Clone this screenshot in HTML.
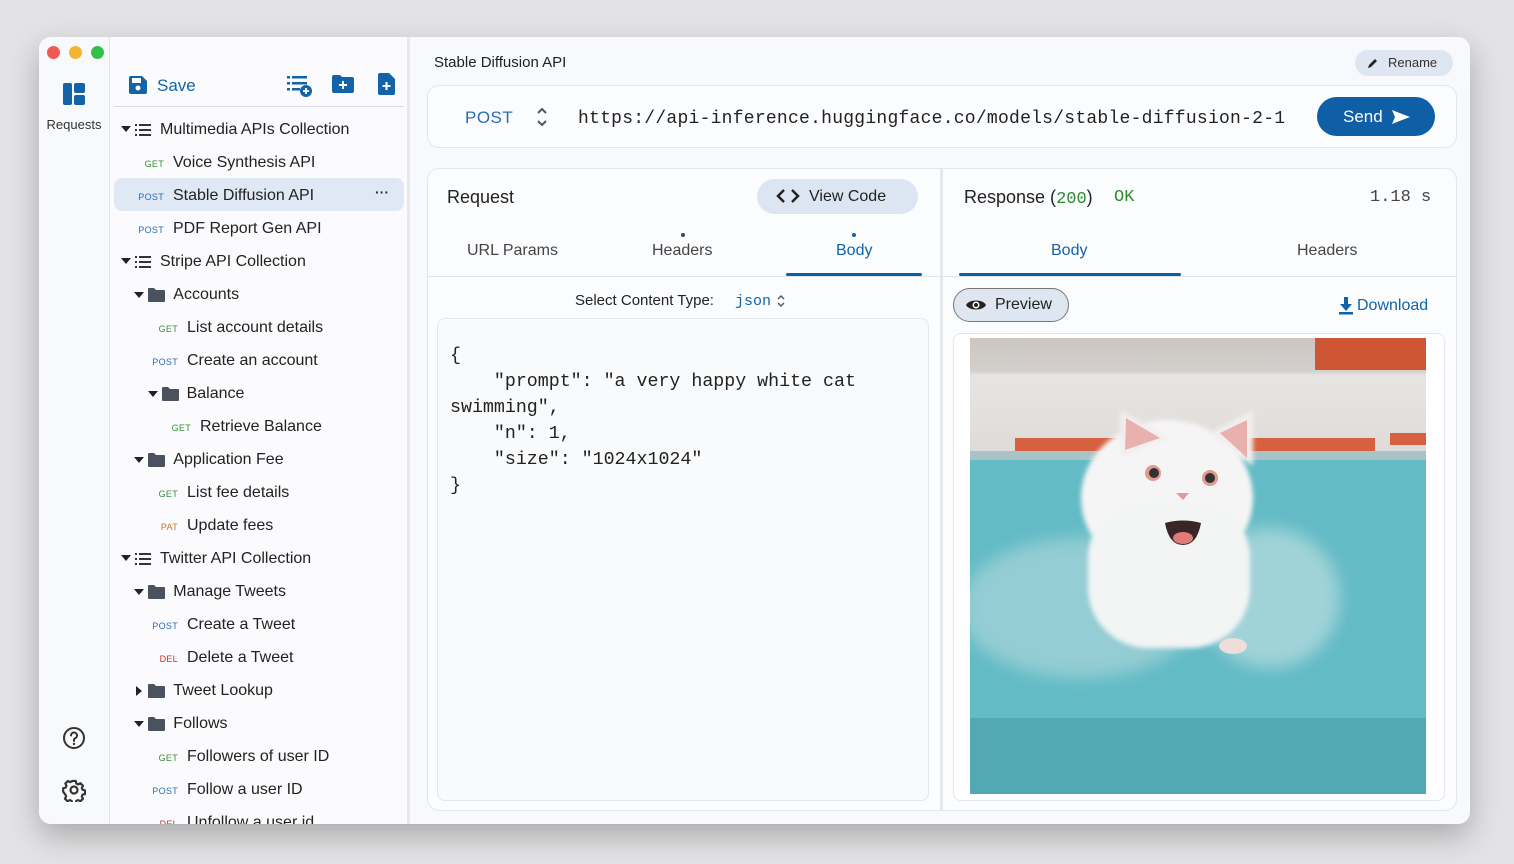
<!DOCTYPE html>
<html><head><meta charset="utf-8"><style>
*{box-sizing:border-box;margin:0;padding:0}
body{width:1514px;height:864px;background:#e3e3e5;font-family:"Liberation Sans",sans-serif;position:relative;overflow:hidden;color:#222}
.win{position:absolute;left:39px;top:37px;width:1431px;height:787px;border-radius:12px;background:#f8f9fc;overflow:hidden;box-shadow:0 12px 30px rgba(0,0,0,.25)}
.rail{position:absolute;left:0;top:0;width:71px;height:100%;background:#f8f9fb;border-right:1px solid #e2e4e8}
.side{position:absolute;left:71px;top:0;width:300px;height:100%;background:#fbfbfd;border-right:3px solid #e6e8ec}
.dot{position:absolute;top:9px;width:13px;height:13px;border-radius:50%}
.abs{position:absolute}
.row{position:absolute;font-size:16px;color:#222;white-space:nowrap;line-height:20px}
.m{position:absolute;font-size:9px;letter-spacing:.3px;line-height:20px}
.get{color:#3c8a3c}.post{color:#2a6db5}.del{color:#c03030}.pat{color:#c77a20}
.mono{font-family:"Liberation Mono",monospace}
.card{position:absolute;background:#fbfcfe;border:1px solid #e4e6ea;border-radius:12px}
</style></head><body>
<div class="win">
 <div class="rail">
  <div class="dot" style="left:8px;background:#ee5b52"></div>
  <div class="dot" style="left:30px;background:#f3b52f"></div>
  <div class="dot" style="left:52px;background:#33c048"></div>
  <svg class="abs" style="left:24px;top:46px" width="22" height="22" viewBox="0 0 22 22"><rect x="0" y="0" width="9" height="22" rx="2" fill="#1263a8"/><rect x="11" y="0" width="11" height="10" rx="2" fill="#1263a8"/><rect x="11" y="12" width="11" height="10" rx="2" fill="#1263a8"/></svg>
  <div class="abs" style="left:0;width:70px;top:80px;text-align:center;font-size:13px;color:#333">Requests</div>
  <svg class="abs" style="left:23px;top:689px" width="24" height="24" viewBox="0 0 24 24"><circle cx="12" cy="12" r="10" fill="none" stroke="#333" stroke-width="2"/><path d="M9 9.5a3 3 0 1 1 4 2.8c-.8.4-1 1-1 1.7V15" fill="none" stroke="#333" stroke-width="2" stroke-linecap="round"/><circle cx="12" cy="18" r="1.2" fill="#333"/></svg>
  <svg class="abs" style="left:23px;top:741px" width="24" height="24" viewBox="0 0 24 24"><path d="M10 2h4l.6 2.8 2 1 2.6-1.3 2.8 2.8-1.3 2.6.9 2 2.8.6v4l-2.8.6-.9 2 1.3 2.6-2.8 2.8-2.6-1.3-2 .9-.6 2.8h-4l-.6-2.8-2-.9-2.6 1.3-2.8-2.8 1.3-2.6-.9-2L0 14v-4l2.8-.6.9-2-1.3-2.6 2.8-2.8 2.6 1.3 2-1z" transform="scale(.9) translate(1.3 1.3)" fill="none" stroke="#333" stroke-width="2.4" stroke-linejoin="round"/><circle cx="12" cy="12" r="3.5" fill="none" stroke="#333" stroke-width="2.2"/></svg>
 </div>
 <div class="side">
  <svg class="abs" style="left:19px;top:39px" width="18" height="18" viewBox="0 0 18 18"><path d="M0 2a2 2 0 0 1 2-2h11l5 5v11a2 2 0 0 1-2 2H2a2 2 0 0 1-2-2z" fill="#1263a8"/><rect x="3" y="2" width="9" height="5" fill="#fbfbfd"/><circle cx="9" cy="12" r="2.5" fill="#fbfbfd"/></svg>
  <div class="abs" style="left:47px;top:39px;font-size:17px;color:#1263a8">Save</div>
  <svg class="abs" style="left:177px;top:38px" width="26" height="22" viewBox="0 0 26 22"><g fill="#1263a8"><rect x="0" y="1" width="3" height="2.5"/><rect x="5" y="1" width="15" height="2.5"/><rect x="0" y="7" width="3" height="2.5"/><rect x="5" y="7" width="15" height="2.5"/><rect x="0" y="13" width="3" height="2.5"/><rect x="5" y="13" width="8" height="2.5"/><circle cx="19" cy="16" r="6"/></g><path d="M19 13v6M16 16h6" stroke="#fff" stroke-width="1.8"/></svg>
  <svg class="abs" style="left:222px;top:38px" width="22" height="18" viewBox="0 0 22 18"><path d="M0 2a2 2 0 0 1 2-2h6l2 2h10a2 2 0 0 1 2 2v12a2 2 0 0 1-2 2H2a2 2 0 0 1-2-2z" fill="#1263a8"/><path d="M11 6v8M7 10h8" stroke="#fff" stroke-width="2"/></svg>
  <svg class="abs" style="left:268px;top:36px" width="17" height="22" viewBox="0 0 17 22"><path d="M0 2a2 2 0 0 1 2-2h9l6 6v14a2 2 0 0 1-2 2H2a2 2 0 0 1-2-2z" fill="#1263a8"/><path d="M8.5 9v8M4.5 13h8" stroke="#fff" stroke-width="2"/></svg>
  <div class="abs" style="left:4px;top:69px;width:290px;height:1px;background:#d9dbe0"></div>
  <div class="abs" style="left:4px;top:141px;width:290px;height:33px;border-radius:8px;background:#dfe8f4"></div>
  <div class="abs" style="left:265px;top:147px;font-size:14px;font-weight:bold;color:#333">···</div>
  <div id="tree"></div>
 </div>
 <div class="abs" style="left:395px;top:17px;font-size:15px;color:#222">Stable Diffusion API</div>
 <div class="abs" style="left:1316px;top:13px;width:98px;height:26px;border-radius:13px;background:#dde6f1;font-size:13px;color:#333;line-height:26px;padding-left:33px">Rename</div>
 <svg class="abs" style="left:1328px;top:20px" width="12" height="12" viewBox="0 0 12 12"><path d="M1 11l1-3 6-6 2 2-6 6z" fill="#222"/></svg>
 <div class="card" style="left:388px;top:48px;width:1030px;height:63px"></div>
 <div class="abs" style="left:426px;top:71px;font-size:17px;color:#2a6db5;letter-spacing:.5px">POST</div>
 <svg class="abs" style="left:497px;top:69px" width="12" height="22" viewBox="0 0 12 22"><path d="M2 7l4-4 4 4M2 15l4 4 4-4" fill="none" stroke="#555" stroke-width="2"/></svg>
 <div class="abs mono" style="left:539px;top:72px;font-size:18px;color:#222;letter-spacing:.25px">https://api-inference.huggingface.co/models/stable-diffusion-2-1</div>
 <div class="abs" style="left:1278px;top:60px;width:118px;height:39px;border-radius:20px;background:#0f5fa6;color:#fff;font-size:17px;line-height:39px;padding-left:26px">Send</div>
 <svg class="abs" style="left:1353px;top:73px" width="18" height="14" viewBox="0 0 18 14"><path d="M0 0l18 7-18 7 3-7z" fill="#fff"/></svg>

 <div class="card" style="left:388px;top:131px;width:1030px;height:643px"></div>
 <div class="abs" style="left:901px;top:132px;width:3px;height:641px;background:#e6e8ec"></div>
 <div class="abs" style="left:389px;top:239px;width:1028px;height:1px;background:#e2e4e8"></div>
 <div class="abs" style="left:408px;top:150px;font-size:18px;color:#222">Request</div>
 <div class="abs" style="left:718px;top:142px;width:161px;height:35px;border-radius:18px;background:#dce6f2;font-size:16px;color:#222;line-height:35px;padding-left:52px">View Code</div>
 <svg class="abs" style="left:737px;top:152px" width="24" height="14" viewBox="0 0 24 14"><path d="M8 1L2 7l6 6M16 1l6 6-6 6" fill="none" stroke="#222" stroke-width="2.5"/></svg>
 <div class="abs" style="left:428px;top:205px;font-size:16px;color:#444">URL Params</div>
 <div class="abs" style="left:613px;top:205px;font-size:16px;color:#444">Headers</div>
 <div class="abs" style="left:642px;top:196px;width:4px;height:4px;border-radius:50%;background:#444"></div>
 <div class="abs" style="left:797px;top:205px;font-size:16px;color:#1263a8">Body</div>
 <div class="abs" style="left:813px;top:196px;width:4px;height:4px;border-radius:50%;background:#1263a8"></div>
 <div class="abs" style="left:747px;top:236px;width:136px;height:3px;background:#0f5fa6;border-radius:2px"></div>
 <div class="abs" style="left:536px;top:255px;font-size:15px;color:#222">Select Content Type:</div>
 <div class="abs mono" style="left:696px;top:256px;font-size:15px;color:#1263a8">json</div>
 <svg class="abs" style="left:738px;top:257px" width="8" height="14" viewBox="0 0 8 14"><path d="M1 5l3-3 3 3M1 9l3 3 3-3" fill="none" stroke="#555" stroke-width="1.4"/></svg>
 <div class="abs" style="left:398px;top:281px;width:492px;height:483px;border:1px solid #e4e6ea;border-radius:8px;background:#f9fafb"></div>
 <pre class="abs mono" style="left:411px;top:306px;font-size:18.3px;line-height:26px;color:#222">{
    "prompt": "a very happy white cat
swimming",
    "n": 1,
    "size": "1024x1024"
}</pre>

 <div class="abs" style="left:925px;top:150px;font-size:18px;color:#222">Response (<span class="mono" style="color:#2f8a2f;font-size:17px">200</span>)</div>
 <div class="abs mono" style="left:1075px;top:151px;font-size:17px;color:#2f8a2f">OK</div>
 <div class="abs mono" style="left:1331px;top:151px;font-size:17px;color:#444">1.18 s</div>
 <div class="abs" style="left:1012px;top:205px;font-size:16px;color:#1263a8">Body</div>
 <div class="abs" style="left:1258px;top:205px;font-size:16px;color:#444">Headers</div>
 <div class="abs" style="left:920px;top:236px;width:222px;height:3px;background:#0f5fa6;border-radius:2px"></div>
 <div class="abs" style="left:914px;top:251px;width:116px;height:34px;border-radius:17px;background:#dde6f1;border:1px solid #777;font-size:16px;color:#222;line-height:32px;padding-left:41px">Preview</div>
 <svg class="abs" style="left:927px;top:261px" width="20" height="14" viewBox="0 0 20 14"><path d="M0 7C3 1 17 1 20 7 17 13 3 13 0 7z" fill="#222"/><circle cx="10" cy="7" r="3.5" fill="#fff"/><circle cx="10" cy="7" r="2" fill="#222"/></svg>
 <svg class="abs" style="left:1300px;top:260px" width="14" height="18" viewBox="0 0 14 18"><path d="M5 0h4v7h4l-6 7-6-7h4z" fill="#1263a8"/><rect x="0" y="15" width="14" height="2.5" fill="#1263a8"/></svg>
 <div class="abs" style="left:1318px;top:260px;font-size:16px;color:#1263a8">Download</div>
 <div class="abs" style="left:914px;top:296px;width:492px;height:468px;border:1px solid #e4e6ea;border-radius:8px;background:#fff"></div>
 <svg class="abs" style="left:931px;top:301px" width="456" height="456" viewBox="0 0 456 456">
  <defs>
   <linearGradient id="bg" x1="0" y1="0" x2="0" y2="1"><stop offset="0" stop-color="#cbc6c2"/><stop offset=".28" stop-color="#d3cfcc"/><stop offset=".32" stop-color="#e7e5e3"/><stop offset="1" stop-color="#dedad7"/></linearGradient>
   <filter id="b"><feGaussianBlur stdDeviation="8"/></filter>
   <filter id="b2"><feGaussianBlur stdDeviation="2.5"/></filter>
  </defs>
  <rect width="456" height="456" fill="#5cb4bf"/>
  <rect width="456" height="118" fill="url(#bg)"/>
  <rect x="345" y="0" width="111" height="32" fill="#cf5634"/>
  <rect x="45" y="100" width="360" height="13" fill="#d6603f"/>
  <rect x="420" y="95" width="36" height="12" fill="#d6603f"/>
  <rect y="113" width="456" height="9" fill="#a9c4c6"/>
  <rect y="122" width="456" height="334" fill="#63bbc5"/>
  <rect y="380" width="456" height="76" fill="#52a9b4"/>
  <ellipse cx="110" cy="270" rx="120" ry="70" fill="#bcdcdf" opacity=".55" filter="url(#b)"/>
  <ellipse cx="300" cy="260" rx="70" ry="70" fill="#c9e3e5" opacity=".6" filter="url(#b)"/>
  <g filter="url(#b2)">
   <ellipse cx="197" cy="160" rx="86" ry="78" fill="#f6f5f5"/>
   <rect x="118" y="160" width="162" height="150" rx="60" fill="#f3f4f4"/>
   <path d="M150 120L150 72 200 100z" fill="#f2eeee"/>
   <path d="M240 95L283 72 283 128z" fill="#f2eeee"/>
  </g>
  <path d="M155 112L156 80 190 100z" fill="#e9b1ad"/>
  <path d="M250 95L277 82 277 120z" fill="#e9b1ad"/>
  <circle cx="183" cy="135" r="8" fill="#e39a8e"/><circle cx="184" cy="135" r="5" fill="#333"/>
  <circle cx="240" cy="140" r="8" fill="#e39a8e"/><circle cx="240" cy="140" r="5" fill="#333"/>
  <path d="M206 155h13l-6 7z" fill="#e49a98"/>
  <path d="M195 185q18 -5 36 0q-4 22 -18 22q-14 0 -18 -22z" fill="#3a2626"/>
  <ellipse cx="213" cy="200" rx="10" ry="6" fill="#e07c78"/>
  <ellipse cx="263" cy="308" rx="14" ry="8" fill="#eedddb"/>
 </svg>
</div>
<script>
var R=[
[0,'c','Multimedia APIs Collection'],[1,'get','Voice Synthesis API'],[1,'post','Stable Diffusion API'],[1,'post','PDF Report Gen API'],
[0,'c','Stripe API Collection'],[1,'f','Accounts',1],[2,'get','List account details'],[2,'post','Create an account'],[2,'f','Balance',1],[3,'get','Retrieve Balance'],
[1,'f','Application Fee',1],[2,'get','List fee details'],[2,'pat','Update fees'],
[0,'c','Twitter API Collection'],[1,'f','Manage Tweets',1],[2,'post','Create a Tweet'],[2,'del','Delete a Tweet'],[1,'f','Tweet Lookup',0],[1,'f','Follows',1],
[2,'get','Followers of user ID'],[2,'post','Follow a user ID'],[2,'del','Unfollow a user id']];
var L={get:'GET',post:'POST',del:'DEL',pat:'PAT'};var h='';
R.forEach(function(r,i){var y=83+i*33,d=r[0]*13.3;
 if(r[1]=='c'){h+='<div class="abs" style="left:11px;top:'+(y+6)+'px;width:0;height:0;border-left:5px solid transparent;border-right:5px solid transparent;border-top:6px solid #222"></div>';
  h+='<svg class="abs" style="left:25px;top:'+(y+3)+'px" width="16" height="14" viewBox="0 0 16 14"><g fill="#333"><rect y="1" width="2" height="2"/><rect x="4" y="1" width="12" height="2"/><rect y="6" width="2" height="2"/><rect x="4" y="6" width="12" height="2"/><rect y="11" width="2" height="2"/><rect x="4" y="11" width="12" height="2"/></g></svg>';
  h+='<div class="row" style="left:50px;top:'+y+'px">'+r[2]+'</div>';}
 else if(r[1]=='f'){var ax=11+d;
  h+= r[3]?'<div class="abs" style="left:'+ax+'px;top:'+(y+7)+'px;width:0;height:0;border-left:5px solid transparent;border-right:5px solid transparent;border-top:6px solid #222"></div>':'<div class="abs" style="left:'+(ax+2)+'px;top:'+(y+5)+'px;width:0;height:0;border-top:5px solid transparent;border-bottom:5px solid transparent;border-left:6px solid #222"></div>';
  h+='<svg class="abs" style="left:'+(ax+14)+'px;top:'+(y+3)+'px" width="17" height="14" viewBox="0 0 17 14"><path d="M0 1a1 1 0 0 1 1-1h5l2 2h8a1 1 0 0 1 1 1v10a1 1 0 0 1-1 1H1a1 1 0 0 1-1-1z" fill="#4a5260"/></svg>';
  h+='<div class="row" style="left:'+(ax+39)+'px;top:'+y+'px">'+r[2]+'</div>';}
 else{var tx=[0,63,77,90][r[0]];
  h+='<div class="m '+r[1]+'" style="right:'+(300-tx+6)+'px;top:'+(y+1)+'px">'+L[r[1]]+'</div>';
  h+='<div class="row" style="left:'+tx+'px;top:'+y+'px">'+r[2]+'</div>';}
});
document.getElementById('tree').outerHTML=h;
</script>
</body></html>
